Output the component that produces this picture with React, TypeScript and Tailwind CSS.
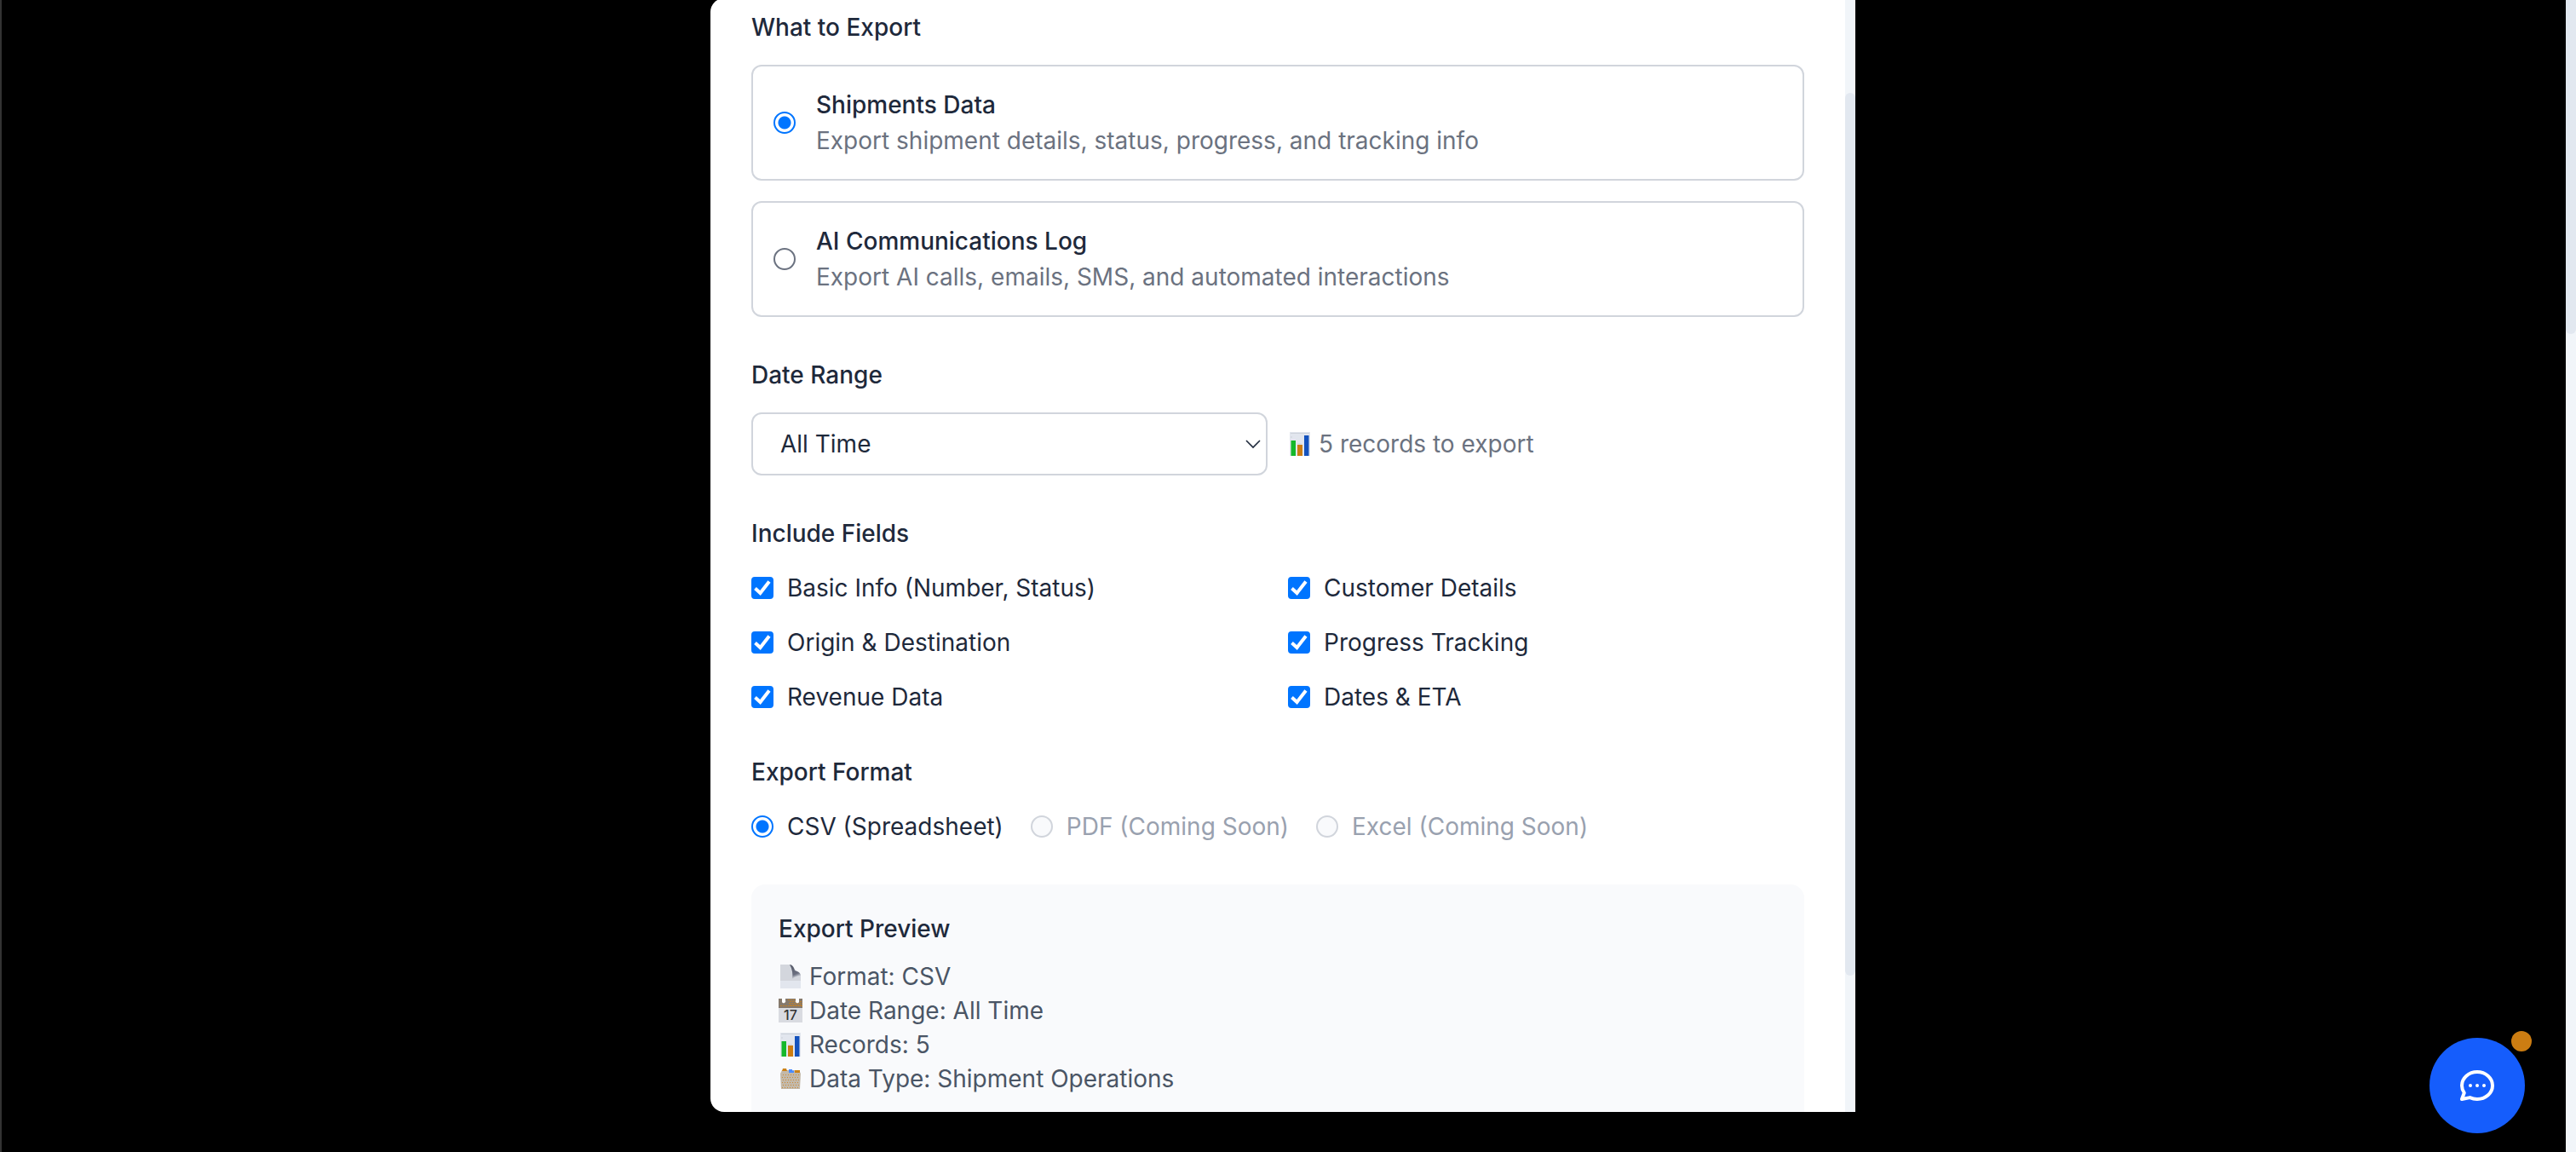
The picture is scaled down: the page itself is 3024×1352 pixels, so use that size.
import { useState } from "react";
import type { ReactNode } from "react";

const FIELDS = [
  "Basic Info (Number, Status)",
  "Customer Details",
  "Origin & Destination",
  "Progress Tracking",
  "Revenue Data",
  "Dates & ETA",
];

const EXPORT_TYPES = [
  {
    id: "shipments",
    title: "Shipments Data",
    description: "Export shipment details, status, progress, and tracking info",
  },
  {
    id: "communications",
    title: "AI Communications Log",
    description: "Export AI calls, emails, SMS, and automated interactions",
  },
];

const FORMATS = [
  { id: "csv", label: "CSV (Spreadsheet)", disabled: false },
  { id: "pdf", label: "PDF (Coming Soon)", disabled: true },
  { id: "excel", label: "Excel (Coming Soon)", disabled: true },
];

const radioClass =
  "size-[26px] shrink-0 appearance-none rounded-full border-2 border-[#6b7280] bg-white checked:border-[#0075ff] checked:bg-[radial-gradient(circle,#0075ff_0_7px,white_8px)] disabled:border-[#d1d5dc] disabled:bg-[#f9fafc]";

function ChartIcon() {
  return (
    <svg className="h-7 w-6 shrink-0" viewBox="0 0 24 28" aria-hidden="true">
      <path fill="#e2e6ee" d="M0 0h24v28H0z" />
      <path stroke="#cdd2da" d="M1 1.500h22M1 6h2M9 14h5" />
      <path fill="#14b82a" d="M1.500 10h5.500v18H1.500z" />
      <path fill="#cc7d12" d="M9 15h6v13H9z" />
      <path fill="#1452bd" d="M17 4h5.500v24H17z" />
    </svg>
  );
}

function PageIcon() {
  return (
    <svg className="h-7 w-6 shrink-0" viewBox="0 0 24 28" aria-hidden="true">
      <defs>
        <linearGradient id="curl" x1="0" y1="0" x2="0.3" y2="1">
          <stop offset="0.3" stopColor="#5c6070" />
          <stop offset="0.75" stopColor="#6c7080" />
          <stop offset="1" stopColor="#d5d9e2" />
        </linearGradient>
      </defs>
      <path fill="#d3d6dd" d="M0 0h12l12 13v15H0z" />
      <path fill="#e2e6ee" d="M0 19h24v9H0z" />
      <path fill="url(#curl)" d="M11 0c3 0 5 3 6 7 4 1 7 3 7 6-4 0-7 1-10 4 1-6 0-12-3-17z" />
    </svg>
  );
}

function CalendarIcon() {
  return (
    <svg className="h-7 w-7 shrink-0" viewBox="0 0 28 28" aria-hidden="true">
      <path fill="#d9dbe1" d="M0 10h28v18H0z" />
      <path fill="#85796c" d="M0 0h28v11H0z" />
      <path
        stroke="#c0802a"
        strokeDasharray="2 1"
        d="M11 1.500h8M13 3.500h15M12 5.500h16M13 7.500h15M2 8.500h26"
      />
      <path fill="#fff" d="M4 0h4v2a2 2 0 0 1-4 2zM20 0h4v4a2 2 0 0 1-4-2z" />
      <text x="14" y="25" textAnchor="middle" fontSize="16" fontWeight="500" fill="#333">
        17
      </text>
    </svg>
  );
}

function DividersIcon() {
  return (
    <svg className="h-7 w-[26px] shrink-0" viewBox="0 0 26 28" aria-hidden="true">
      <path fill="#c3b9aa" d="m1 8 2-4h20l2 4-1 18H2z" />
      <path fill="#cc8219" d="M4 2h4l1 3H3zM18 4h6v3h-6z" />
      <path fill="#4a8bff" d="M11 3h4v1.500h2V7h-6z" />
      <path
        stroke="#cf8a35"
        strokeDasharray="1 2"
        d="M4 9.500h19M3 12.500h21M4 15.500h20M3 18.500h21M4 21.500h20M3 24.500h21"
      />
    </svg>
  );
}

function Section({ title, children }: { title: string; children: ReactNode }) {
  return (
    <fieldset>
      <legend className="mb-6 leading-10 font-medium">{title}</legend>
      {children}
    </fieldset>
  );
}

function IconText({ icon, children }: { icon: ReactNode; children: ReactNode }) {
  return (
    <span className="flex items-center gap-2">
      <span className="flex w-7 justify-center">{icon}</span>
      <span>{children}</span>
    </span>
  );
}

function ExportDialog() {
  const [exportType, setExportType] = useState("shipments");
  const [format, setFormat] = useState("csv");

  return (
    <div
      role="dialog"
      aria-label="Export data"
      className="-mt-0.5 flex h-[1307px] w-full max-w-[1344px] overflow-hidden rounded-l-2xl bg-white"
    >
      <form className="flex min-w-0 flex-1 flex-col gap-12 px-12 pt-3.5">
        <Section title="What to Export">
          <div className="flex flex-col gap-6">
            {EXPORT_TYPES.map((type) => (
              <label
                key={type.id}
                className="flex items-center gap-6 rounded-xl border-2 border-[#d1d5dc] p-6"
              >
                <input
                  type="radio"
                  name="exportType"
                  className={radioClass}
                  checked={exportType === type.id}
                  onChange={() => setExportType(type.id)}
                />
                <span>
                  <span className="block font-medium">{type.title}</span>
                  <span className="block text-[#6b7280]">{type.description}</span>
                </span>
              </label>
            ))}
          </div>
        </Section>

        <Section title="Date Range">
          <div className="grid grid-cols-2 items-center gap-6">
            <div className="relative">
              <select
                aria-label="Date Range"
                className="block h-[74px] w-full appearance-none rounded-xl border-2 border-[#d1d5dc] bg-white px-8"
              >
                <option>All Time</option>
              </select>
              <svg
                className="pointer-events-none absolute top-8 right-2 h-3 w-[18px]"
                viewBox="0 0 18 12"
                fill="none"
                stroke="#1e293b"
                strokeWidth="1.6"
                aria-hidden="true"
              >
                <path d="m1 1 8 8 8-8" />
              </svg>
            </div>
            <p className="text-[#6b7280]">
              <IconText icon={<ChartIcon />}>5 records to export</IconText>
            </p>
          </div>
        </Section>

        <Section title="Include Fields">
          <div className="grid grid-cols-2 gap-6">
            {FIELDS.map((field) => (
              <label key={field} className="flex h-10 items-center gap-4">
                <span className="grid size-[26px]">
                  <input
                    type="checkbox"
                    defaultChecked
                    className="peer col-start-1 row-start-1 size-[26px] appearance-none rounded border-2 border-[#6b7280] checked:border-[#0075ff] checked:bg-[#0075ff]"
                  />
                  <svg
                    className="pointer-events-none invisible col-start-1 row-start-1 size-[26px] peer-checked:visible"
                    viewBox="0 0 26 26"
                    fill="none"
                    stroke="white"
                    strokeWidth="4"
                    aria-hidden="true"
                  >
                    <path d="m4.500 13.500 6 5.500L21 5.500" />
                  </svg>
                </span>
                {field}
              </label>
            ))}
          </div>
        </Section>

        <Section title="Export Format">
          <div className="flex gap-8">
            {FORMATS.map((item) => (
              <label
                key={item.id}
                className={`flex h-10 items-center gap-4 ${item.disabled ? "text-[#99a1af]" : ""}`}
              >
                <input
                  type="radio"
                  name="format"
                  className={radioClass}
                  disabled={item.disabled}
                  checked={format === item.id}
                  onChange={() => setFormat(item.id)}
                />
                {item.label}
              </label>
            ))}
          </div>
        </Section>

        <section className="flex-1 rounded-t-2xl bg-[#f9fafc] p-8">
          <h4 className="mb-4 leading-10 font-medium">Export Preview</h4>
          <ul className="leading-10 text-[#4a5565]">
            <li>
              <IconText icon={<PageIcon />}>Format: CSV</IconText>
            </li>
            <li>
              <IconText icon={<CalendarIcon />}>Date Range: All Time</IconText>
            </li>
            <li>
              <IconText icon={<ChartIcon />}>Records: 5</IconText>
            </li>
            <li>
              <IconText icon={<DividersIcon />}>Data Type: Shipment Operations</IconText>
            </li>
          </ul>
        </section>
      </form>

      <div className="w-3 bg-[#f1f5f9] pt-[111px]">
        <div className="h-[1036px] rounded-full bg-[#e2e8f0]" />
      </div>
    </div>
  );
}

function ChatButton() {
  return (
    <button
      type="button"
      aria-label="Open chat"
      className="fixed right-15 bottom-[22px] flex size-28 items-center justify-center rounded-full bg-[#155dfc]"
    >
      <svg className="size-12" viewBox="0 0 24 24" fill="none" stroke="white" strokeWidth="2" aria-hidden="true">
        <path
          strokeLinecap="round"
          strokeLinejoin="round"
          d="M8 12h.01M12 12h.01M16 12h.01M21 12c0 4.418-4.030 8-9 8a9.863 9.863 0 01-4.255-.949L3 20l1.395-3.720C3.512 15.042 3 13.574 3 12c0-4.418 4.030-8 9-8s9 3.582 9 8z"
        />
      </svg>
      <span className="absolute -top-2 -right-2 size-6 rounded-full bg-[#cc7d12]" />
    </button>
  );
}

export default function App() {
  return (
    <div className="flex min-h-screen overflow-hidden bg-black font-['Inter',sans-serif] text-[28px] leading-[42px] text-[#1e293b]">
      <main className="flex flex-1 items-start justify-center shadow-[inset_2px_0_0_#333333]">
        <ExportDialog />
      </main>
      <div className="w-3 bg-[#f1f5f9]">
        <div className="h-[392px] rounded-b-full bg-[#e2e8f0]" />
      </div>
      <ChatButton />
    </div>
  );
}
